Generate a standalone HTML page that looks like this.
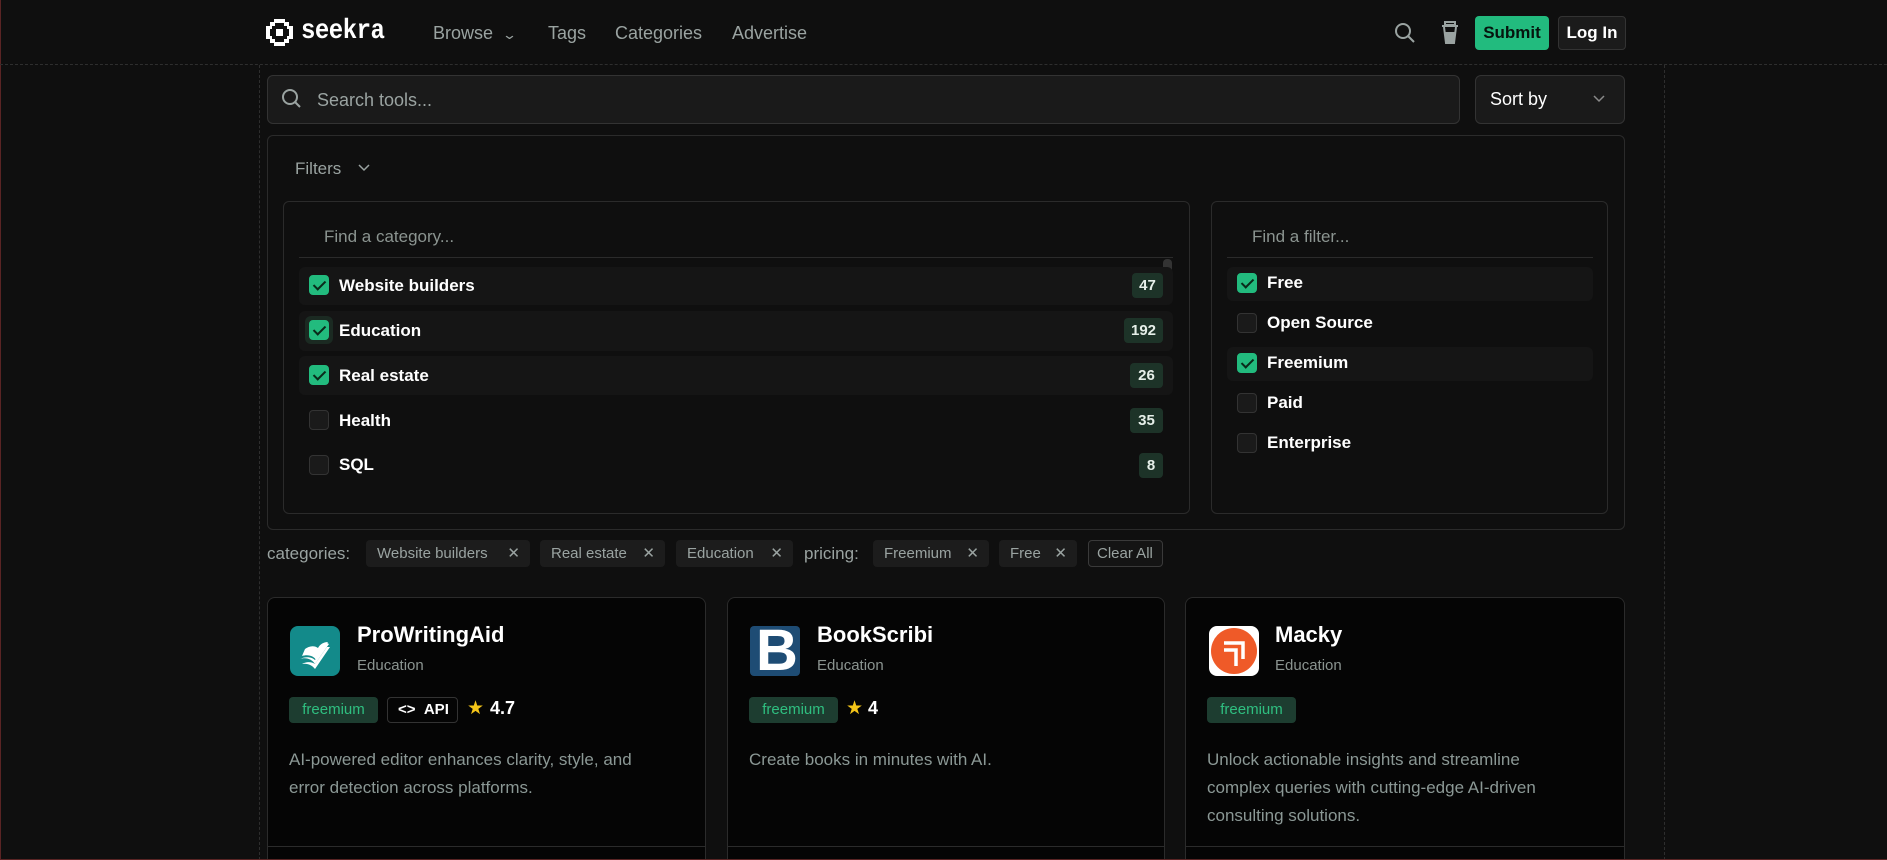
<!DOCTYPE html>
<html style="overflow:hidden;height:860px"><head><meta charset="utf-8"><style>
*{box-sizing:border-box;margin:0;padding:0}
body{width:1887px;height:860px;background:#0f0f0f;font-family:"Liberation Sans",sans-serif;overflow:hidden;position:relative;color:#fff}
.a{position:absolute}
.nav{color:#9aa3a1;font-size:18px;top:23px}
.box{border:1px solid #2b2b2b;border-radius:6px}
.cb{position:absolute;width:20px;height:20px;border-radius:4px;border:1px solid #333;background:#1a1a1a}
.cb.on{background:#22bb7e;border-color:#22bb7e}
.cb.on::after{content:"";position:absolute;left:6px;top:2px;width:5px;height:10px;border:solid #0a2a1a;border-width:0 2px 2px 0;transform:rotate(45deg)}
.lbl{position:absolute;font-size:17px;font-weight:bold;color:#fff}
.row{position:absolute;background:#151515;border-radius:6px}
.cnt{position:absolute;height:25px;background:#1d3328;border-radius:4px;color:#e6efe9;font-size:15px;font-weight:bold;text-align:center;line-height:25px}
.chip{position:absolute;top:540px;height:27px;background:#1c1c1c;border-radius:4px;color:#9aa3a1;font-size:15px;line-height:27px;padding-left:11px}
.chip span{position:absolute;right:10px;font-size:15px}
.card{position:absolute;top:597px;height:263px;background:#050505;border:1px solid #2b2b2b;border-bottom:none;border-radius:8px 8px 0 0}
.card .div{position:absolute;left:0;right:0;top:248px;border-top:1px solid #2b2b2b}
.t{position:absolute;left:89px;top:24px;font-size:22px;font-weight:bold;color:#fff}
.s{position:absolute;left:89px;top:59px;font-size:15px;color:#8b9490}
.fr{position:absolute;left:21px;top:99px;width:89px;height:26px;background:#1d3d30;border-radius:4px;color:#2fbf80;font-size:15px;line-height:26px;text-align:center}
.d{position:absolute;left:21px;top:148px;font-size:17px;line-height:28px;color:#8b9895;width:362px}
.logo{position:absolute;left:22px;top:28px;width:50px;height:50px;border-radius:8px;overflow:hidden}
</style></head><body>
<div class="a" style="left:0;top:0;width:1px;height:860px;background:#5a2424"></div>
<div class="a" style="left:0;top:859px;width:1887px;height:1px;background:#5a2424;z-index:5"></div>
<div class="a" style="left:0;top:64px;width:1887px;border-top:1px dashed #2e2e2e"></div>
<div class="a" style="left:259px;top:65px;height:800px;border-left:1px dashed #2e2e2e"></div>
<div class="a" style="left:1664px;top:65px;height:800px;border-left:1px dashed #2e2e2e"></div>
<svg class="a" style="left:265px;top:18px" width="29" height="29" viewBox="0 0 29 29"><path d="M9 1h11v3h4v4h4v13h-4v4h-4v3H9v-3H5v-4H1V8h4V4h4z M10 5v3H7v3H5v7h2v3h3v3h9v-3h3v-3h2v-7h-2V8h-3V5z" fill="#fff" fill-rule="evenodd"/><rect x="11" y="11" width="7" height="7" fill="#fff"/></svg>
<div class="a" style="left:301px;top:18px;font-family:'Liberation Mono',monospace;font-weight:bold;font-size:24px;letter-spacing:-0.5px;color:#fff;transform:scaleY(1.15)">seekra</div>
<div class="a nav" style="left:433px">Browse <span style="font-size:13px;display:inline-block;transform:scaleX(1.4);margin-left:6px">&#8964;</span></div>
<div class="a nav" style="left:548px">Tags</div>
<div class="a nav" style="left:615px">Categories</div>
<div class="a nav" style="left:732px">Advertise</div>
<svg class="a" style="left:1393px;top:21px" width="24" height="24" viewBox="0 0 24 24" fill="none" stroke="#9aa3a1" stroke-width="2"><circle cx="10" cy="10" r="7"/><path d="M15 15l6 6"/></svg>
<svg class="a" style="left:1440px;top:20px" width="20" height="26" viewBox="0 0 20 26" fill="none" stroke="#9aa3a1" stroke-width="2"><path d="M5 2h10v3H5z"/><path d="M2 6h16"/><path d="M4 7l2 16h8l2-16"/><path d="M6 13h8l-1 9H7z" fill="#9aa3a1"/></svg>
<div class="a" style="left:1475px;top:16px;width:74px;height:34px;background:#22bb7e;border-radius:4px;color:#06150e;font-size:17px;font-weight:bold;text-align:center;line-height:34px">Submit</div>
<div class="a" style="left:1558px;top:16px;width:68px;height:34px;background:#1b1b1b;border:1px solid #333;border-radius:4px;color:#fff;font-size:17px;font-weight:bold;text-align:center;line-height:32px">Log In</div>
<div class="a box" style="left:267px;top:75px;width:1193px;height:49px;background:#1a1a1a;border-color:#333"></div>
<svg class="a" style="left:280px;top:87px" width="24" height="24" viewBox="0 0 24 24" fill="none" stroke="#9aa3a1" stroke-width="2"><circle cx="10" cy="10" r="7"/><path d="M15 15l5 5"/></svg>
<div class="a" style="left:317px;top:90px;font-size:18px;color:#9aa3a1">Search tools...</div>
<div class="a box" style="left:1475px;top:75px;width:150px;height:49px;background:#1a1a1a;border-color:#333"></div>
<div class="a" style="left:1490px;top:89px;font-size:18px;color:#fff">Sort by</div>
<svg class="a" style="left:1592px;top:94px" width="14" height="10" viewBox="0 0 14 10" fill="none" stroke="#8a8a8a" stroke-width="1.5"><path d="M2 2l5 5 5-5"/></svg>
<div class="a box" style="left:267px;top:135px;width:1358px;height:395px;background:#0f0f0f"></div>
<div class="a" style="left:295px;top:159px;font-size:17px;color:#9aa3a1">Filters</div>
<svg class="a" style="left:357px;top:163px" width="14" height="10" viewBox="0 0 14 10" fill="none" stroke="#9aa3a1" stroke-width="1.5"><path d="M2 2l5 5 5-5"/></svg>
<div class="a box" style="left:283px;top:201px;width:907px;height:313px"></div>
<div class="a" style="left:324px;top:227px;font-size:17px;color:#8b9490">Find a category...</div>
<div class="a" style="left:299px;top:257px;width:874px;border-top:1px solid #2b2b2b"></div>
<div class="a" style="left:1163px;top:259px;width:9px;height:22px;background:#333;border-radius:4px"></div>
<div class="row" style="left:299px;top:267px;width:874px;height:38px"></div>
<div class="row" style="left:299px;top:311px;width:874px;height:40px"></div>
<div class="row" style="left:299px;top:356px;width:874px;height:39px"></div>
<div class="cb on" style="left:309px;top:275px"></div><div class="lbl" style="left:339px;top:276px">Website builders</div><div class="cnt" style="left:1132px;top:273px;width:31px">47</div>
<div class="a" style="left:305px;top:316px;width:28px;height:28px;border-radius:6px;background:#1b2a22"></div>
<div class="cb on" style="left:309px;top:320px"></div><div class="lbl" style="left:339px;top:321px">Education</div><div class="cnt" style="left:1124px;top:318px;width:39px">192</div>
<div class="cb on" style="left:309px;top:365px"></div><div class="lbl" style="left:339px;top:366px">Real estate</div><div class="cnt" style="left:1130px;top:363px;width:33px">26</div>
<div class="cb" style="left:309px;top:410px"></div><div class="lbl" style="left:339px;top:411px">Health</div><div class="cnt" style="left:1130px;top:408px;width:33px">35</div>
<div class="cb" style="left:309px;top:455px"></div><div class="lbl" style="left:339px;top:455px">SQL</div><div class="cnt" style="left:1139px;top:453px;width:24px">8</div>
<div class="a box" style="left:1211px;top:201px;width:397px;height:313px"></div>
<div class="a" style="left:1252px;top:227px;font-size:17px;color:#8b9490">Find a filter...</div>
<div class="a" style="left:1227px;top:257px;width:366px;border-top:1px solid #2b2b2b"></div>
<div class="row" style="left:1227px;top:267px;width:366px;height:34px"></div>
<div class="row" style="left:1227px;top:347px;width:366px;height:34px"></div>
<div class="cb on" style="left:1237px;top:273px"></div><div class="lbl" style="left:1267px;top:273px">Free</div>
<div class="cb" style="left:1237px;top:313px"></div><div class="lbl" style="left:1267px;top:313px">Open Source</div>
<div class="cb on" style="left:1237px;top:353px"></div><div class="lbl" style="left:1267px;top:353px">Freemium</div>
<div class="cb" style="left:1237px;top:393px"></div><div class="lbl" style="left:1267px;top:393px">Paid</div>
<div class="cb" style="left:1237px;top:433px"></div><div class="lbl" style="left:1267px;top:433px">Enterprise</div>
<div class="a" style="left:267px;top:544px;font-size:17px;color:#9aa3a1">categories:</div>
<div class="chip" style="left:366px;width:164px">Website builders<span>✕</span></div>
<div class="chip" style="left:540px;width:125px">Real estate<span>✕</span></div>
<div class="chip" style="left:676px;width:117px">Education<span>✕</span></div>
<div class="a" style="left:804px;top:544px;font-size:17px;color:#9aa3a1">pricing:</div>
<div class="chip" style="left:873px;width:116px">Freemium<span>✕</span></div>
<div class="chip" style="left:999px;width:78px">Free<span>✕</span></div>
<div class="chip" style="left:1088px;width:75px;border:1px solid #3a3a3a;background:#141414;line-height:25px;padding-left:8px">Clear All</div>
<div class="card" style="left:267px;width:439px">
<div class="logo" style="background:#138a8a"><svg width="50" height="50" viewBox="0 0 50 50" fill="#fff"><path d="M12 30c6-2 12 0 14 4l12-18c-4 0-8 2-10 6-4-3-9-2-13 1z"/><path d="M10 33c6-2 12 0 15 5l14-20-2-1-12 17c-3-3-9-4-15-1z"/><path d="M12 38c5-1 10 1 13 5l15-22-3 0-12 17c-3-2-8-3-13 0z"/></svg></div>
<div class="t">ProWritingAid</div><div class="s">Education</div>
<div class="fr">freemium</div>
<div class="a" style="left:119px;top:99px;width:71px;height:26px;border:1px solid #333;border-radius:4px;color:#fff;font-size:15px;font-weight:bold;line-height:24px;padding-left:10px">&lt;&gt;&nbsp;&nbsp;API</div>
<div class="a" style="left:199px;top:99px;color:#f5c518;font-size:19px">★</div>
<div class="a" style="left:222px;top:100px;color:#fff;font-size:18px;font-weight:bold">4.7</div>
<div class="d">AI-powered editor enhances clarity, style, and error detection across platforms.</div>
<div class="div"></div></div>
<div class="card" style="left:727px;width:438px">
<div class="logo" style="background:#1e4c74;border-radius:4px"><div style="position:absolute;left:6px;top:-4px;width:44px;height:58px;font-size:58px;font-weight:bold;color:#fff;line-height:58px;font-family:'Liberation Sans',sans-serif">B</div></div>
<div class="t">BookScribi</div><div class="s">Education</div>
<div class="fr">freemium</div>
<div class="a" style="left:118px;top:99px;color:#f5c518;font-size:19px">★</div>
<div class="a" style="left:140px;top:100px;color:#fff;font-size:18px;font-weight:bold">4</div>
<div class="d">Create books in minutes with AI.</div>
<div class="div"></div></div>
<div class="card" style="left:1185px;width:440px">
<div class="logo" style="background:#fff;left:23px"><svg width="50" height="50" viewBox="0 0 50 50"><circle cx="25" cy="25" r="23" fill="#ef5a28"/><path d="M15 17h19v16M15 24h12v16M27 24v16" stroke="#fff" stroke-width="3.5" fill="none"/></svg></div>
<div class="t">Macky</div><div class="s">Education</div>
<div class="fr">freemium</div>
<div class="d">Unlock actionable insights and streamline complex queries with cutting-edge AI-driven consulting solutions.</div>
<div class="div"></div></div>
</body></html>
